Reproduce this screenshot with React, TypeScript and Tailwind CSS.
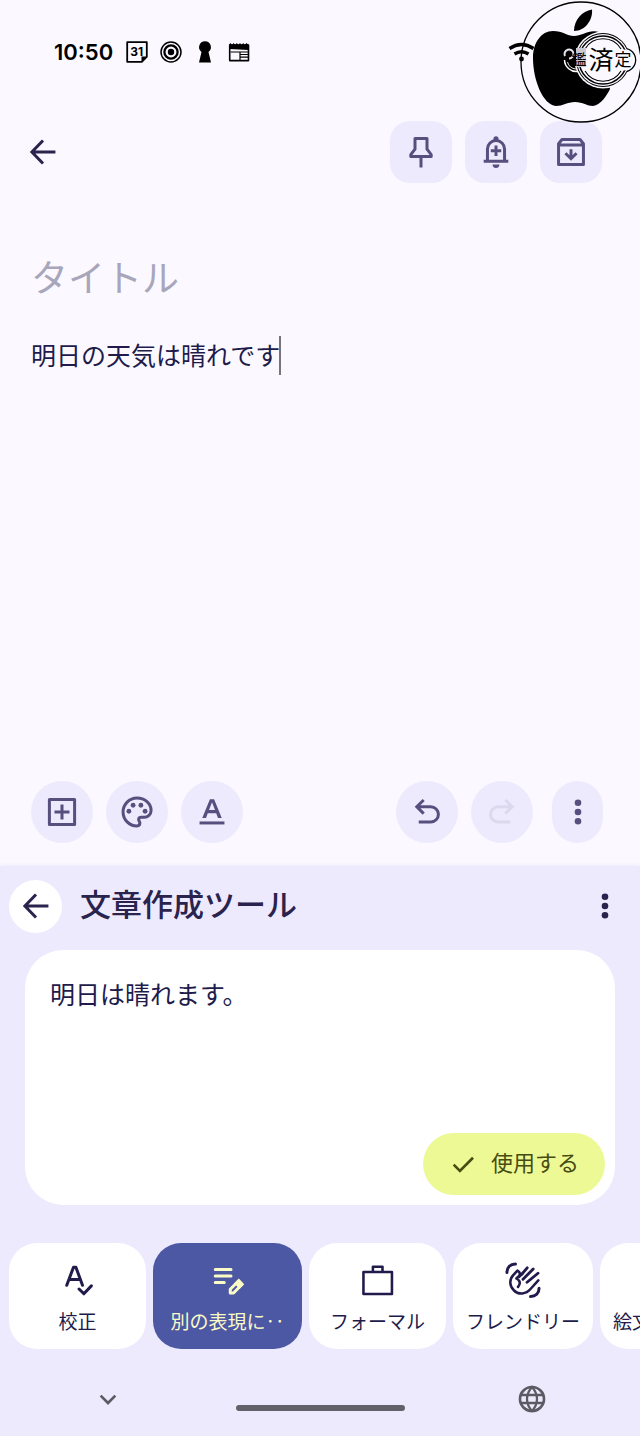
import type { ReactNode } from "react";

type IconProps = { className?: string; children: ReactNode };

function Icon({ className = "size-9", children }: IconProps) {
  return (
    <svg
      viewBox="0 0 24 24"
      className={className}
      fill="none"
      stroke="currentColor"
      strokeWidth="2"
      aria-hidden="true"
    >
      {children}
    </svg>
  );
}

const BackArrow = () => (
  <Icon>
    <path d="M20.300 12H5M12 4.300 4.600 12l7.400 7.700" />
  </Icon>
);

const Dots = () => (
  <Icon>
    <g fill="currentColor" stroke="none">
      <circle cx="12" cy="5.800" r="2.200" />
      <circle cx="12" cy="12" r="2.200" />
      <circle cx="12" cy="18.200" r="2.200" />
    </g>
  </Icon>
);

function StatusBar() {
  return (
    <div className="flex h-[104px] items-center pl-[54px] text-black">
      <span className="w-[59px] text-[22px] font-semibold leading-none [font-family:Inter,sans-serif]">10:50</span>
      <div className="ml-3 flex items-center gap-[10px]">
        <svg viewBox="0 0 24 24" className="size-6" aria-hidden="true">
          <path d="M2.200 2.200h19.600v14.600l-5 5H2.200z" fill="none" stroke="currentColor" strokeWidth="1.800" strokeLinejoin="round" />
          <path d="M16.500 22v-5.500H22z" fill="currentColor" />
          <text x="11.800" y="16.200" textAnchor="middle" fontFamily="Inter" fontWeight="700" fontSize="12" fill="currentColor">31</text>
        </svg>
        <svg viewBox="0 0 24 24" className="size-6" fill="none" stroke="currentColor" aria-hidden="true">
          <circle cx="12" cy="12" r="10" strokeWidth="1.500" />
          <circle cx="12" cy="12" r="6.600" strokeWidth="2.300" />
          <circle cx="12" cy="12" r="3.200" fill="currentColor" stroke="none" />
        </svg>
        <svg viewBox="0 0 24 24" className="size-6" fill="currentColor" aria-hidden="true">
          <path d="M12 1.200a6 6 0 0 0-3.500 10.800L6 22.500h12L15.500 12A6 6 0 0 0 12 1.200z" />
        </svg>
        <svg viewBox="0 0 24 24" className="size-6" aria-hidden="true">
          <path d="M2.700 5h18.800v15.600H2.700z" fill="none" stroke="currentColor" strokeWidth="1.600" strokeLinejoin="round" />
          <path d="M2.500 9V4l1-1 1.500 2L6.600 3l1.600 2 1.600-2 1.600 2L13 3l1.600 2 1.600-2 1.600 2 1.600-2 2.300 2v5z" fill="currentColor" />
          <path d="M3.500 12h9.500V20M13 14.500h8M13 17.200h8M13 12h8" fill="none" stroke="currentColor" strokeWidth="1.200" />
        </svg>
      </div>
    </div>
  );
}

function Seal() {
  return (
    <svg viewBox="0 0 150 130" className="pointer-events-none absolute right-0 top-0 h-[130px] w-[150px]" aria-label="鑑済定" role="img">
      <circle cx="91" cy="62" r="60" fill="none" stroke="#000" strokeWidth="1.300" />
      <g fill="none" stroke="#000" strokeWidth="3.400">
        <path d="M19.500 48.500Q31.500 40.500 43.500 48.500" />
        <path d="M24.500 54Q31.500 49.500 38.500 54" />
      </g>
      <circle cx="31.500" cy="59" r="2.400" />
      <path d="M84 31C84 20 92 11 102 9.500C103 20 95 31 84 31Z" />
      <path d="M109 32C99 29 92 36 84 36C77 36 73 31 63 31C51 31 43 43 43 58C43 80 53 105 66 106C73 106 77 102 85 102C93 102 97 106 103 106C111 105 117 95 120 89L113 60Z" />
      <g fill="#fbf9ff">
        <circle cx="113" cy="60" r="28.500" />
      </g>
      <g fill="#000">
        <circle cx="134" cy="60" r="12.300" />
        <circle cx="113" cy="60" r="27" />
      </g>
      <g fill="#fbf9ff">
        <circle cx="134" cy="60" r="11" />
        <circle cx="113" cy="60" r="26" />
      </g>
      <circle cx="113" cy="60" r="24" fill="none" stroke="#000" strokeWidth="1.500" />
      <circle cx="134" cy="60" r="10.500" fill="#fbf9ff" />
      <path d="M95 49A21 21 0 0 1 131 49M95 71A21 21 0 0 0 131 71" fill="none" stroke="#000" strokeWidth="1.100" />
      <path d="M82 50h8v16h-8z" fill="#000" />
      <path d="M86 48h10v19H86z" fill="#c9c7cf" />
      <path d="M74.500 60A12 12 0 0 0 88 71.500" fill="none" stroke="#fff" strokeWidth="1.500" />
      <path d="M77.500 62A9.500 9.500 0 0 0 86 69" fill="none" stroke="#fff" strokeWidth="0.900" />
      <path d="M75 56A4.500 4.500 0 1 1 79 58.500" fill="none" stroke="#e8e6ee" strokeWidth="2" />
      <g fontFamily="Noto Sans CJK JP" fill="#000" textAnchor="middle">
        <text x="111" y="69" fontSize="25">済</text>
        <text x="133" y="66" fontSize="17">定</text>
        <text x="89" y="65" fontSize="15">鑑</text>
      </g>
    </svg>
  );
}

const tile = "flex size-[62px] items-center justify-center bg-[#edeafd] text-[#57507f]";

function Editor() {
  return (
    <main className="flex flex-1 flex-col">
      <header className="flex items-center gap-[13px] pl-[25px] pr-[38px] pt-[17px] text-[#29234d]">
        <button aria-label="戻る" className="mr-auto"><BackArrow /></button>
        <button aria-label="固定" className={`${tile} rounded-[20px]`}>
          <Icon>
            <path d="M8 3h8v7.100l2.800 3.600v1.300H5.200v-1.300L8 10.100zM12 15v7.300" strokeLinejoin="round" />
          </Icon>
        </button>
        <button aria-label="リマインダー" className={`${tile} rounded-[20px]`}>
          <Icon>
            <path d="M3.800 18.200h16.400M6.300 18V10a5.700 5.700 0 0 1 11.400 0v8M12 7.700v7M8.500 11.200h7" />
            <path d="M10.300 4.500V3.200a1.700 1.700 0 0 1 3.400 0v1.300zM9.700 20.300h4.600a2.300 2.300 0 0 1-4.600 0z" fill="currentColor" stroke="none" />
          </Icon>
        </button>
        <button aria-label="アーカイブ" className={`${tile} rounded-[20px]`}>
          <Icon>
            <path d="M3.700 6.500 6 3.700h12l2.300 2.800v13.800H3.700zM4 7.300h16" strokeLinejoin="round" />
            <path d="M12 10.200v6M8.300 12.800l3.700 3.700 3.700-3.700" />
          </Icon>
        </button>
      </header>
      <div className="flex flex-1 flex-col px-[31px] pt-[65px]">
        <input
          aria-label="タイトル"
          placeholder="タイトル"
          className="h-[56px] w-full bg-transparent pb-px text-[37px] leading-[56px] text-[#29234d] outline-none placeholder:text-[#a9a6bb]"
        />
        <div className="mt-8 flex items-center">
          <input
            aria-label="メモ"
            defaultValue="明日の天気は晴れです"
            className="h-[39px] bg-transparent p-0 pb-[4px] text-[25px] text-[#211b4b] outline-none [field-sizing:content]"
          />
          <span className="-ml-px h-[39px] w-[2px] bg-[#77747f]" />
        </div>
      </div>
      <div className="flex items-center gap-[13px] pb-[23px] pl-[31px] pr-[37px]">
        <button aria-label="追加" className={`${tile} rounded-full`}>
          <Icon><path d="M3.600 3.600h16.800v16.800H3.600zM12 7v10M7 12h10" strokeLinejoin="round" /></Icon>
        </button>
        <button aria-label="背景" className={`${tile} rounded-full`}>
          <Icon>
            <path d="M12 2.700a9.300 9.300 0 0 0 0 18.600c1.100 0 1.900-.8 1.900-1.900 0-1.100-.8-1.300-.8-2.400 0-1 .8-1.500 1.800-1.500h1.800A4.600 4.600 0 0 0 21.400 11c0-4.700-4.200-8.300-9.400-8.300z" />
            <g fill="currentColor" stroke="none">
              <circle cx="6.600" cy="11.500" r="1.600" /><circle cx="9.400" cy="7.500" r="1.600" />
              <circle cx="14.600" cy="7.500" r="1.600" /><circle cx="17.400" cy="11.500" r="1.600" />
            </g>
          </Icon>
        </button>
        <button aria-label="書式" className={`${tile} rounded-full`}>
          <Icon>
            <path d="M3.700 19.300h16.600" />
            <path d="M5.500 16 10.600 3.500h2.800L18.500 16H16l-1.200-3.200H9.200L8 16zM10 10.700h4L12 5.500z" fill="currentColor" stroke="none" fillRule="evenodd" />
          </Icon>
        </button>
        <button aria-label="元に戻す" className={`${tile} ml-auto rounded-full`}>
          <Icon><path d="M6.500 18.700h8a5 5 0 0 0 0-10.200H5.200M9.800 4 5.200 8.500l4.600 4.600" /></Icon>
        </button>
        <button aria-label="やり直し" disabled className={`${tile} rounded-full`}>
          <Icon className="size-9 text-[#dcd8ee]"><path d="M17.500 18.700h-8a5 5 0 0 1 0-10.200h9.300M14.200 4l4.600 4.500-4.600 4.600" /></Icon>
        </button>
        <button aria-label="その他" className="ml-[6px] flex h-[62px] w-[51px] items-center justify-center rounded-full bg-[#edeafd] text-[#57507f]">
          <Dots />
        </button>
      </div>
    </main>
  );
}

type Tool = { label: string; width: string; icon: ReactNode; active?: boolean };

const tools: Tool[] = [
  {
    label: "校正",
    width: "w-[137px]",
    icon: <path d="M4.500 15.500 9 3.500h1.600L15 15.500M6 11.700h7.500M12.700 18l3.200 3.200 5-5.300" strokeLinecap="round" strokeLinejoin="round" />,
  },
  {
    label: "別の表現に‥",
    width: "w-[149px]",
    active: true,
    icon: (
      <>
        <path d="M3.500 5H14M3.500 9.300H14M3.500 13.600h6" strokeLinecap="round" />
        <path d="M13.500 20.700v-2.500l5.500-5.500 2.200 2.300-5.500 5.700z" strokeLinejoin="round" />
        <path d="m17.500 14.200 1.700-1.700 2.200 2.300-1.700 1.700z" fill="currentColor" />
      </>
    ),
  },
  {
    label: "フォーマル",
    width: "w-[137px]",
    icon: <path d="M2.300 6.700h19v14.600h-19zM8.600 6.500V3.200H15v3.300" strokeWidth="1.700" strokeLinejoin="round" />,
  },
  {
    label: "フレンドリー",
    width: "w-[140px]",
    icon: (
      <g strokeWidth="1.700" strokeLinecap="round" strokeLinejoin="round">
        <path d="M1.300 7C1.300 3.500 3.500 1.300 7 1.300M22.700 17.500c0 3.400-2.200 5.500-5.700 5.500" strokeWidth="2" />
        <path d="M11.300 8 14.800 3.900M12 11.500l6.800-6.800M14.700 13.500 22 7.500" strokeWidth="1.900" />
        <path d="M22.200 12.300 17 18C14 21.500 9 22 6 19C2.800 16 2.800 11.600 5.500 8.700L8.300 5.700C10 6.700 10.300 8 9.400 9.200L7.600 11C10 12.300 10.600 14.300 8.700 16.600M11.300 8 9.300 10" />
      </g>
    ),
  },
  {
    label: "絵文字を追加",
    width: "w-[140px]",
    icon: <><circle cx="12" cy="12" r="9" /><path d="M8 14a4 4 0 0 0 8 0M9 9v1M15 9v1" /></>,
  },
];

function WritingTools() {
  return (
    <section className="bg-[#edeafd] text-[#29234d] shadow-[0_-1px_4px_#edeafd]">
      <header className="flex h-[84px] items-center pb-[4px] pl-[9px] pr-[17px]">
        <button aria-label="閉じる" className="flex size-[53px] items-center justify-center rounded-full bg-white">
          <BackArrow />
        </button>
        <h1 className="ml-[18px] mr-auto pb-[6px] text-[31px] font-normal leading-[46px] [font-family:'Noto_Sans_CJK_JP_Medium','Noto_Sans_CJK_JP',sans-serif]">文章作成ツール</h1>
        <button aria-label="メニュー"><Dots /></button>
      </header>
      <div className="mx-[25px] flex h-[255px] flex-col justify-between rounded-[38px] bg-white p-[10px] pt-[24px]">
        <p className="ml-[15px] text-[25px] leading-[38px] text-[#211b4b]">明日は晴れます。</p>
        <button className="flex h-[62px] w-[182px] items-center gap-3 self-end rounded-full bg-[#edf994] pl-[24px] text-[22px] text-[#474c12]">
          <Icon className="size-8"><path d="m5 12.500 4.700 4.700L19.500 7.300" /></Icon>
          <span className="pb-[6px]">使用する</span>
        </button>
      </div>
      <div className="mt-[38px] flex gap-[7px] overflow-hidden pl-[9px]">
        {tools.map((tool) => (
          <button
            key={tool.label}
            className={`flex h-[106px] shrink-0 flex-col items-center whitespace-nowrap rounded-[28px] pt-[19px] text-[19px] leading-7 ${tool.width} ${tool.active ? "bg-[#4d58a5] text-[#fbfbc6]" : "bg-white text-[#211b4b]"}`}
          >
            <Icon className="mb-[9px] size-9 shrink-0">{tool.icon}</Icon>
            {tool.label}
          </button>
        ))}
      </div>
      <nav className="flex h-[87px] items-start justify-between px-[92px] pt-[34px] text-[#5c5a62]">
        <button aria-label="キーボードを隠す"><Icon className="size-8"><path d="m6.500 9.500 5.500 5.500 5.500-5.500" /></Icon></button>
        <span className="mt-[22px] h-[6px] w-[169px] rounded-full bg-[#626069]" />
        <button aria-label="言語">
          <Icon className="size-8">
            <circle cx="12" cy="12" r="9" />
            <path d="M3.500 9h17M3.500 15h17M12 3c-5 5.500-5 12.500 0 18 5-5.500 5-12.500 0-18z" strokeWidth="1.700" />
          </Icon>
        </button>
      </nav>
    </section>
  );
}

export default function App() {
  return (
    <div lang="ja" className="relative flex min-h-screen flex-col overflow-hidden bg-[#fbf9ff] [font-family:'Noto_Sans_CJK_JP',sans-serif]">
      <StatusBar />
      <Seal />
      <Editor />
      <WritingTools />
    </div>
  );
}
